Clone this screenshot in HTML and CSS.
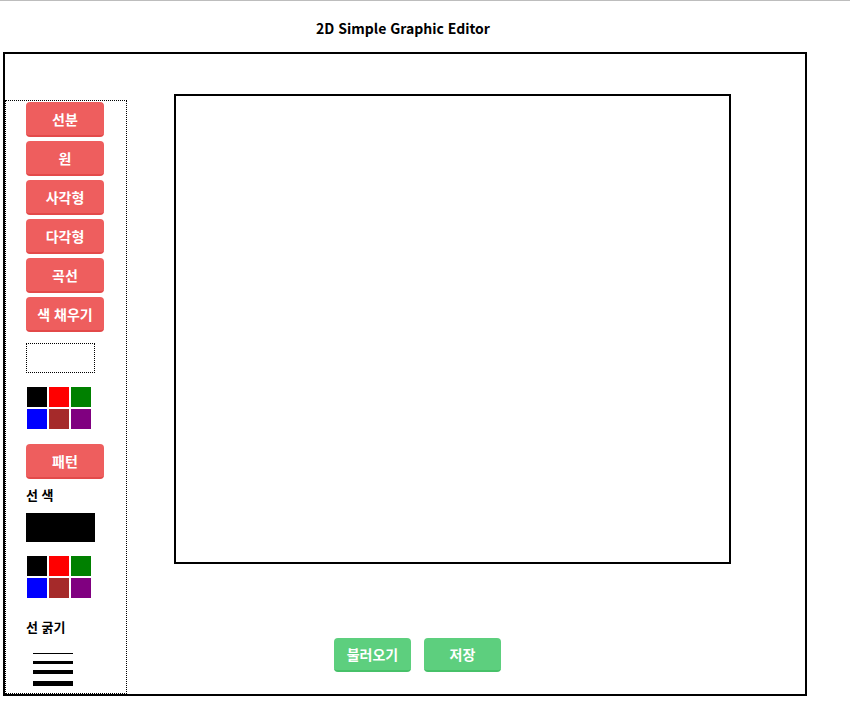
FILE: index.html
```html
<!DOCTYPE html>
<html lang="ko">
<head>
<meta charset="utf-8">
<title>2D Simple Graphic Editor</title>
<link rel="stylesheet" href="styles.css">
</head>
<body>
<div class="topline"></div>
<h1 class="title">2D Simple Graphic Editor</h1>
<div class="frame">
  <aside class="sidebar">
    <div class="tools">
      <button class="btn red">선분</button>
      <button class="btn red">원</button>
      <button class="btn red">사각형</button>
      <button class="btn red">다각형</button>
      <button class="btn red">곡선</button>
      <button class="btn red">색 채우기</button>
    </div>
    <div class="fill-preview"></div>
    <div class="palette palette-fill">
      <span class="sw c-black"></span><span class="sw c-red"></span><span class="sw c-green"></span>
      <span class="sw c-blue"></span><span class="sw c-brown"></span><span class="sw c-purple"></span>
    </div>
    <button class="btn red pattern">패턴</button>
    <div class="label label-color">선 색</div>
    <div class="line-preview"></div>
    <div class="palette palette-line">
      <span class="sw c-black"></span><span class="sw c-red"></span><span class="sw c-green"></span>
      <span class="sw c-blue"></span><span class="sw c-brown"></span><span class="sw c-purple"></span>
    </div>
    <div class="label label-width">선 굵기</div>
    <div class="widths">
      <div class="w w1"></div>
      <div class="w w3"></div>
      <div class="w w4"></div>
      <div class="w w5"></div>
    </div>
  </aside>
  <main class="main">
    <div class="canvas"></div>
    <div class="actions">
      <button class="btn green">불러오기</button>
      <button class="btn green">저장</button>
    </div>
  </main>
</div>
</body>
</html>
```
FILE: styles.css
```css
html, body {
  margin: 0;
  padding: 0;
  background: #fff;
  font-family: "Noto Sans CJK KR", "Noto Sans", sans-serif;
}
.topline {
  height: 1px;
  background: #bdbdbd;
}
.title {
  width: 800px;
  margin: 0 0 0 3px;
  height: 51px;
  font-size: 14px;
  font-weight: 700;
  line-height: 54px;
  text-align: center;
  color: #000;
}
.frame {
  margin-left: 3px;
  width: 800px;
  height: 640px;
  border: 2px solid #000;
  display: flex;
  align-items: flex-start;
}
.sidebar {
  margin-top: 46px;
  border: 1px dotted #000;
  padding: 1px 0 0 20px;
  box-sizing: border-box;
  width: 122px;
  height: 594px;
}
.tools {
  display: flex;
  flex-direction: column;
  gap: 4px;
}
.btn {
  display: block;
  width: 78px;
  height: 35px;
  border: none;
  border-radius: 4px;
  color: #fff;
  font-family: "Noto Sans CJK KR", "Noto Sans", sans-serif;
  font-size: 14px;
  font-weight: 700;
  padding: 0;
  margin: 0;
}
.red {
  background: #ee5e5e;
  border-bottom: 2px solid #e34a4a;
}
.green {
  background: #5dcf7e;
  border-bottom: 2px solid #47c169;
  width: 77px;
  height: 34px;
}
.fill-preview {
  margin-top: 11px;
  width: 69px;
  height: 30px;
  border: 1px dotted #000;
  box-sizing: border-box;
}
.palette {
  display: grid;
  grid-template-columns: repeat(3, 20px);
  grid-auto-rows: 20px;
  gap: 2px;
  margin-left: 1px;
}
.palette-fill { margin-top: 14px; }
.palette-line { margin-top: 14px; }
.sw { display: block; }
.c-black { background: #000; }
.c-red { background: #f00; }
.c-green { background: #008000; }
.c-blue { background: #00f; }
.c-brown { background: #a52a2a; }
.c-purple { background: #800080; }
.pattern { margin-top: 15px; }
.label {
  font-size: 13px;
  font-weight: 700;
  color: #000;
  height: 20px;
  line-height: 20px;
}
.label-color { margin-top: 6px; }
.line-preview {
  margin-top: 8px;
  width: 69px;
  height: 29px;
  background: #000;
}
.label-width { margin-top: 19px; }
.widths {
  margin-top: 16px;
  margin-left: 7px;
  display: flex;
  flex-direction: column;
}
.w { width: 40px; background: #000; }
.w1 { height: 1px; }
.w3 { height: 3px; margin-top: 7px; }
.w4 { height: 4px; margin-top: 6px; }
.w5 { height: 5px; margin-top: 7px; }
.main {
  margin-left: 47px;
  padding-top: 40px;
}
.canvas {
  width: 553px;
  height: 466px;
  border: 2px solid #000;
}
.actions {
  margin-top: 74px;
  margin-left: 160px;
  display: flex;
  gap: 13px;
}
```
